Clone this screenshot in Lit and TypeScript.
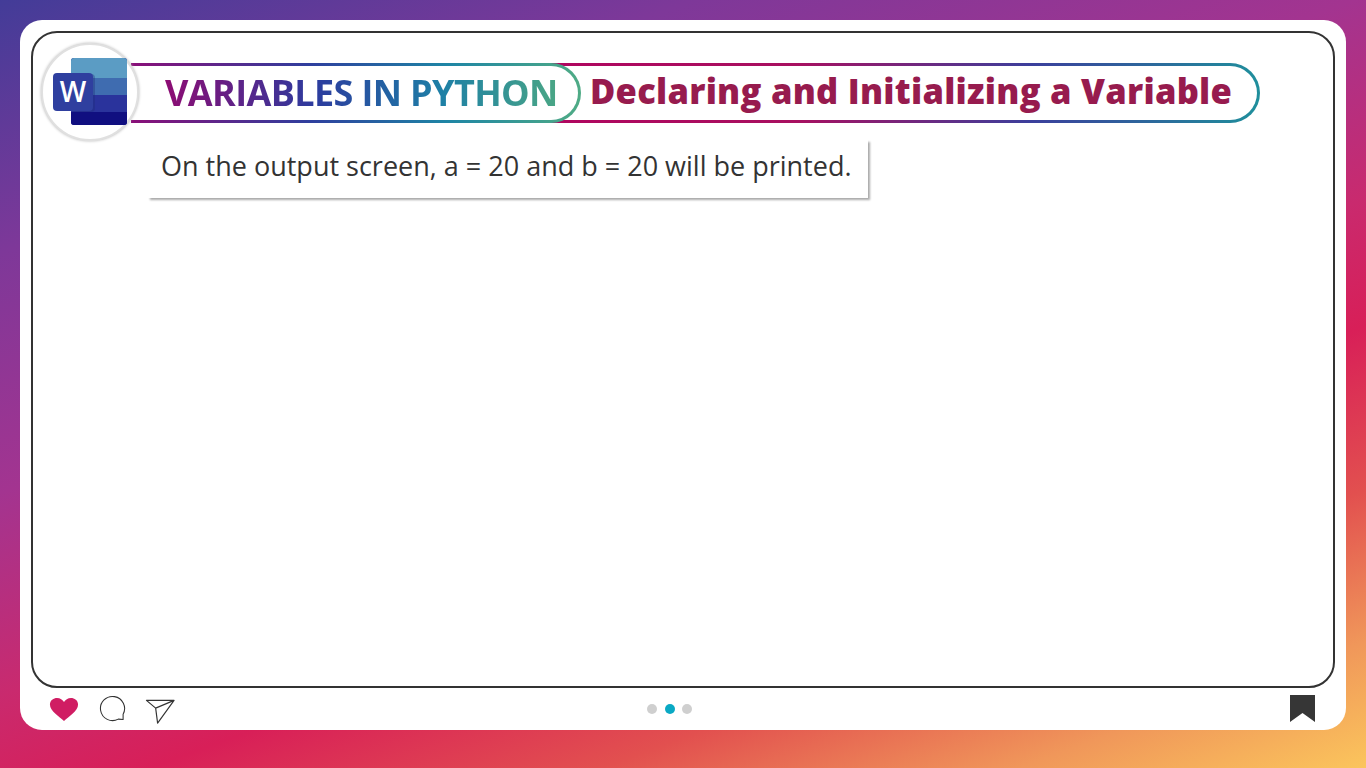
import { LitElement, html, css } from "lit";
import { customElement } from "lit/decorators.js";

@customElement("app-root")
export class AppRoot extends LitElement {
  static styles = css`
    :host { display: block; width: 1366px; height: 768px; font-family: "Open Sans", sans-serif; overflow: hidden; }
    .bg {
      box-sizing: border-box; width: 1366px; height: 768px; padding: 20px;
      background: linear-gradient(160deg, #433c98 0%, #7e3899 20%, #a33490 39%, #c92a6e 55%, #d81f58 65%, #e2504f 78%, #f0975a 90%, #fbc55c 100%);
    }
    .card {
      box-sizing: border-box; width: 1326px; height: 710px; background: #fff; border-radius: 22px;
      padding: 11px 11px 0; display: flex; flex-direction: column;
    }
    .frame {
      box-sizing: border-box; height: 657px; flex: none; border: 2px solid #333; border-radius: 26px;
      padding: 9px 0 0 8px; display: flex; flex-direction: column;
    }
    .head { display: flex; align-items: center; height: 100px; position: relative; }
    .logo {
      flex: none; width: 98px; height: 98px; box-sizing: border-box; border-radius: 50%; background: #fff;
      border: 2px solid #e0e0e0; box-shadow: 0 0 3px #b5b5b5; position: relative; z-index: 3; display: block;
    }
    .pills { display: flex; margin-left: -8px; height: 60px; margin-top: 1px; }
    .pill1 {
      box-sizing: border-box; width: 450px; height: 60px; border: 3px solid transparent; border-left: 0;
      border-radius: 0 32px 32px 0; position: relative; z-index: 2;
      background: linear-gradient(#fff, #fff) padding-box,
        linear-gradient(90deg, #8a0f78 0%, #2e3f9e 40%, #1e85a5 70%, #4fab85 100%) border-box;
      display: flex; align-items: center; padding-left: 34px;
    }
    .t1 {
      font-size: 36px; font-weight: 660; white-space: nowrap; line-height: 60px; letter-spacing: -0.62px;
      background: linear-gradient(90deg, #8d0c73 0%, #2c3b9e 38%, #1d7fa6 70%, #4aa685 100%);
      -webkit-background-clip: text; background-clip: text; color: transparent;
    }
    .pill2 {
      box-sizing: border-box; width: 714px; height: 60px; margin-left: -35px; border: 3px solid transparent; border-left: 0;
      border-radius: 0 32px 32px 0; z-index: 1;
      background: linear-gradient(#fff, #fff) padding-box,
        linear-gradient(90deg, #b0065f 0%, #a81060 35%, #3b3f9c 68%, #1f8f9c 100%) border-box;
      display: flex; align-items: center; padding-left: 44px;
    }
    .t2 { font-size: 34.5px; font-weight: 760; letter-spacing: 0.26px; color: #971b4e; white-space: nowrap; line-height: 54px; padding-bottom: 4px; }
    .note {
      align-self: flex-start; margin: -2px 0 0 107px; box-sizing: border-box; width: 720px; height: 58px;
      background: #fff; display: flex; align-items: center; padding: 0 0 8px 13px;
      box-shadow: 2px 2px 2px #aaa;
      font-size: 27px; color: #333; white-space: nowrap;
    }
    .foot { flex: 1; display: flex; align-items: center; margin: 0 -11px; padding: 0 31px 0 29px; }
    .left { flex: none; width: 598px; display: flex; align-items: center; gap: 20px; }
    .cm { margin-top: -2px; margin-left: 0; }
    .snd { margin-top: 3px; margin-left: -1px; }
    .dots { display: flex; gap: 7.5px; align-items: center; }
    .dot { width: 10px; height: 10px; border-radius: 50%; background: #cfcfcf; }
    .dot.on { background: #0aa9c4; }
    .right { margin-left: auto; }
    svg { display: block; }
  `;

  render() {
    return html`<div class="bg"><div class="card">
      <div class="frame">
        <div class="head">
          <div class="logo">
            <svg width="94" height="94" viewBox="0 0 94 94">
              <rect x="28" y="13" width="56" height="67" rx="3" fill="#1a1a8c"/>
              <path d="M28 16a3 3 0 0 1 3-3h50a3 3 0 0 1 3 3v17H28z" fill="#5b9cc4"/>
              <rect x="28" y="33" width="56" height="17" fill="#3f6cb0"/>
              <rect x="28" y="50" width="56" height="17" fill="#2a339c"/>
              <path d="M28 67h56v10a3 3 0 0 1-3 3H31a3 3 0 0 1-3-3z" fill="#100f80"/>
              <rect x="28" y="29" width="24" height="38" rx="4" fill="#1c2a78" opacity="0.35"/>
              <rect x="10" y="28" width="40" height="38" rx="4" fill="#2f3f9f"/>
              <text x="30" y="57" text-anchor="middle" font-family="Open Sans" font-weight="600" font-size="28" fill="#fff">W</text>
            </svg>
          </div>
          <div class="pills">
            <div class="pill1"><span class="t1">VARIABLES IN PYTHON</span></div>
            <div class="pill2"><span class="t2">Declaring and Initializing a Variable</span></div>
          </div>
        </div>
        <div class="note">On the output screen, a = 20 and b = 20 will be printed.</div>
      </div>
      <div class="foot">
        <div class="left">
          <svg width="30" height="25" viewBox="0 0 32 28" preserveAspectRatio="none"><path d="M16 27 C11 22 1 16 1 8.500 C1 3.500 5 1 8.500 1 C12 1 14.500 3 16 5.500 C17.500 3 20 1 23.500 1 C27 1 31 3.500 31 8.500 C31 16 21 22 16 27Z" fill="#d01d63"/></svg>
          <svg class="cm" width="27" height="27" viewBox="0 0 28 28"><path d="M25 25.500 L20 25 A12.500 12.500 0 1 1 25 20 Z" fill="none" stroke="#333" stroke-width="1.100" stroke-linejoin="round"/></svg>
          <svg class="snd" width="31" height="28" viewBox="0 0 32 28"><path d="M1.500 3 L30 3 L13 26.500 L11 11 Z M11 11 L30 3" fill="none" stroke="#333" stroke-width="1.200" stroke-linejoin="round"/></svg>
        </div>
        <div class="dots"><span class="dot"></span><span class="dot on"></span><span class="dot"></span></div>
        <svg class="right" width="25" height="28" viewBox="0 0 25 28"><path d="M0 0H25V27L12.500 18 0 27Z" fill="#363636"/></svg>
      </div>
    </div></div>`;
  }
}
